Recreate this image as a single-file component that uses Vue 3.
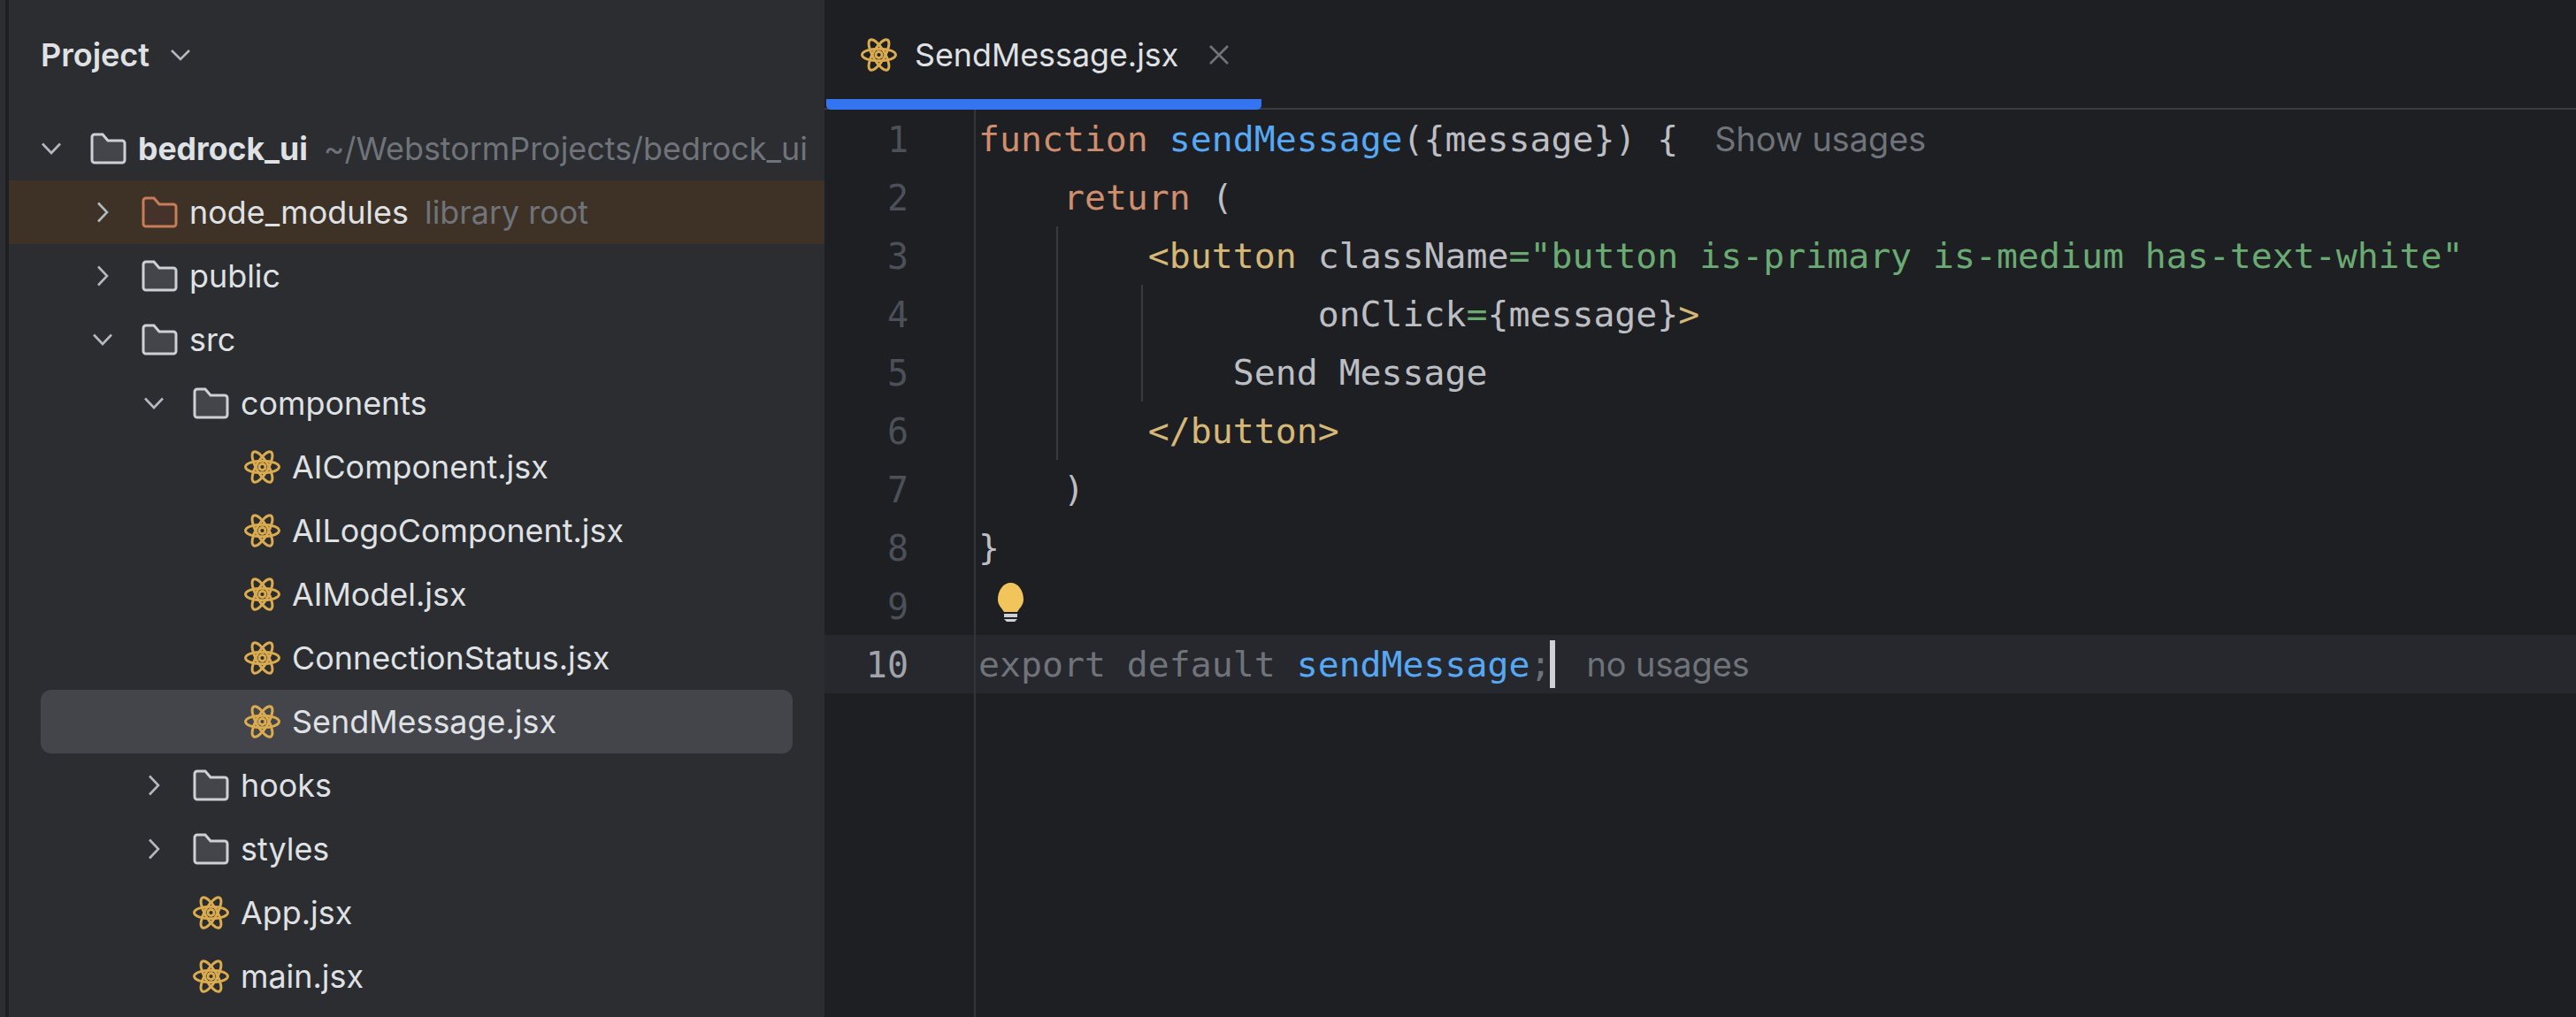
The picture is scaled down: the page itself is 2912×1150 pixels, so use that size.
<script setup>
const tree = [
  { name: 'bedrock_ui', kind: 'folder', open: true, level: 0, bold: true, hint: '~/WebstormProjects/bedrock_ui' },
  { name: 'node_modules', kind: 'lib', open: false, level: 1, hint: 'library root', tint: true },
  { name: 'public', kind: 'folder', open: false, level: 1 },
  { name: 'src', kind: 'folder', open: true, level: 1 },
  { name: 'components', kind: 'folder', open: true, level: 2 },
  { name: 'AIComponent.jsx', kind: 'file', level: 3 },
  { name: 'AILogoComponent.jsx', kind: 'file', level: 3 },
  { name: 'AIModel.jsx', kind: 'file', level: 3 },
  { name: 'ConnectionStatus.jsx', kind: 'file', level: 3 },
  { name: 'SendMessage.jsx', kind: 'file', level: 3, selected: true },
  { name: 'hooks', kind: 'folder', open: false, level: 2 },
  { name: 'styles', kind: 'folder', open: false, level: 2 },
  { name: 'App.jsx', kind: 'file', level: 2 },
  { name: 'main.jsx', kind: 'file', level: 2 }
]

const lines = [
  [['kw', 'function'], ['tx', ' '], ['fn', 'sendMessage'], ['tx', '({message}) {'], ['hint', 'Show usages']],
  [['tx', '    '], ['kw', 'return'], ['tx', ' (']],
  [['tx', '        '], ['tag', '<button'], ['tx', ' className'], ['str', '="button is-primary is-medium has-text-white"']],
  [['tx', '                onClick'], ['str', '='], ['tx', '{message}'], ['tag', '>']],
  [['tx', '            Send Message']],
  [['tx', '        '], ['tag', '</button>']],
  [['tx', '    )']],
  [['tx', '}']],
  [],
  [['dim', 'export default '], ['fn', 'sendMessage'], ['dim', ';'], ['caret', ''], ['hint2', 'no usages']]
]
</script>

<template>
  <div class="app">
    <div class="strip"></div>
    <aside class="sidebar">
      <header class="side-head">
        <span class="side-title">Project</span>
        <svg class="head-chev" viewBox="0 0 24 14" fill="none"><path d="M2 2 L12 12 L22 2" /></svg>
      </header>
      <ul class="tree">
        <li
          v-for="row in tree"
          :key="row.name"
          class="row"
          :class="{ tint: row.tint, selected: row.selected }"
          :style="{ paddingLeft: 46 + row.level * 58 + 'px' }"
        >
          <span class="chev-box">
            <svg v-if="row.kind !== 'file' && row.open" class="chev-down" viewBox="0 0 24 14" fill="none"><path d="M2 1.5 L12 12 L22 1.5" /></svg>
            <svg v-else-if="row.kind !== 'file'" class="chev-right" viewBox="0 0 14 24" fill="none"><path d="M2 1.5 L12 12 L2 22.5" /></svg>
          </span>
          <svg v-if="row.kind !== 'file'" class="folder" :class="{ lib: row.kind === 'lib' }" viewBox="0 0 41 36">
            <path d="M2 5 a3 3 0 0 1 3-3 h9 l6 7 h16 a3 3 0 0 1 3 3 v19 a3 3 0 0 1-3 3 h-31 a3 3 0 0 1-3-3 z" />
          </svg>
          <svg v-else class="react" viewBox="0 0 41 38" fill="none">
            <circle cx="20.5" cy="19" r="3.6" />
            <ellipse cx="20.5" cy="19" rx="19" ry="6.8" />
            <ellipse cx="20.5" cy="19" rx="19.5" ry="6.8" transform="rotate(60 20.5 19)" />
            <ellipse cx="20.5" cy="19" rx="19.5" ry="6.8" transform="rotate(120 20.5 19)" />
          </svg>
          <span class="name" :class="{ bold: row.bold }">{{ row.name }}</span>
          <span v-if="row.hint" class="row-hint">{{ row.hint }}</span>
        </li>
      </ul>
    </aside>
    <main class="main">
      <div class="tabs">
        <div class="tab">
          <svg class="react tab-icon" viewBox="0 0 41 38" fill="none">
            <circle cx="20.5" cy="19" r="3.6" />
            <ellipse cx="20.5" cy="19" rx="19" ry="6.8" />
            <ellipse cx="20.5" cy="19" rx="19.5" ry="6.8" transform="rotate(60 20.5 19)" />
            <ellipse cx="20.5" cy="19" rx="19.5" ry="6.8" transform="rotate(120 20.5 19)" />
          </svg>
          <span class="tab-name">SendMessage.jsx</span>
          <svg class="close" viewBox="0 0 24 24" fill="none"><path d="M2 2 L22 22 M22 2 L2 22" /></svg>
        </div>
      </div>
      <div class="editor">
        <div class="gutter-line"></div>
        <div class="guide g1"></div>
        <div class="guide g2"></div>
        <div
          v-for="(line, i) in lines"
          :key="i"
          class="line"
          :class="{ current: i === 9 }"
        >
          <span class="num">{{ i + 1 }}</span>
          <svg v-if="i === 8" class="bulb" viewBox="0 0 29 44">
            <path class="bulb-glass" d="M14.5 0 C22.5 0 29 8 29 19 C29 25 25 28 22 33 H7 C4 28 0 25 0 19 C0 8 6.5 0 14.5 0 Z" />
            <rect class="bulb-base" x="7" y="35" width="15" height="4" />
            <path class="bulb-base" d="M7 41 H22 L19 44 H10 Z" />
          </svg>
          <span class="code">
            <template v-for="(t, j) in line" :key="j">
              <span v-if="t[0] === 'caret'" class="caret"></span>
              <span v-else :class="t[0]">{{ t[1] }}</span>
            </template>
          </span>
        </div>
      </div>
    </main>
  </div>
</template>

<style scoped>
.app {
  display: flex;
  width: 2912px;
  height: 1150px;
  overflow: hidden;
  background: #1e1f22;
  font-family: Inter, "Noto Sans", sans-serif;
}
.strip {
  width: 6px;
  flex: none;
  background: #2b2d30;
  border-right: 4px solid #1e1f22;
}
.sidebar {
  width: 922px;
  flex: none;
  background: #2b2d30;
  display: flex;
  flex-direction: column;
}
.side-head {
  height: 124px;
  flex: none;
  display: flex;
  align-items: center;
  padding-left: 36px;
  gap: 23px;
}
.side-title {
  font-size: 36px;
  font-weight: 600;
  color: #dfe1e5;
}
.head-chev {
  width: 24px;
  height: 14px;
}
.head-chev path,
.chev-down path,
.chev-right path {
  stroke: #b4b8bf;
  stroke-width: 2.6;
}
.tree {
  list-style: none;
  margin: 8px 0 0;
  padding: 0;
}
.row {
  height: 72px;
  display: flex;
  align-items: center;
  position: relative;
  box-sizing: border-box;
  font-size: 35.9px;
  color: #dfe1e5;
  white-space: nowrap;
  margin-left: -10px;
}
.row.tint {
  background: #3e3226;
  margin-left: 0;
  padding-left: 94px !important;
}
.row.selected::before {
  content: "";
  position: absolute;
  left: 46px;
  right: 36px;
  top: 0;
  bottom: 0;
  border-radius: 12px;
  background: #43454a;
}
.row > * {
  position: relative;
}
.chev-box {
  width: 24px;
  height: 24px;
  flex: none;
  display: flex;
  align-items: center;
  justify-content: center;
  margin-right: 32px;
}
.chev-down {
  width: 24px;
  height: 14px;
}
.chev-right {
  width: 14px;
  height: 24px;
}
.folder {
  width: 41px;
  height: 36px;
  flex: none;
  margin-right: 13px;
}
.folder path {
  fill: #43454a;
  stroke: #ced0d6;
  stroke-width: 3;
}
.folder.lib path {
  fill: #45322b;
  stroke: #c77d55;
}
.react {
  width: 41px;
  height: 38px;
  flex: none;
  margin-right: 13px;
}
.react circle,
.react ellipse {
  stroke: #dbab4f;
  stroke-width: 3;
}
.name.bold {
  font-weight: 700;
  font-size: 35.6px;
}
.row-hint {
  margin-left: 18px;
  color: #6f737a;
}
.main {
  flex: 1;
  min-width: 0;
  display: flex;
  flex-direction: column;
}
.tabs {
  height: 124px;
  flex: none;
  box-sizing: border-box;
  border-bottom: 2px solid #393b40;
}
.tab {
  width: 492px;
  height: 124px;
  margin-left: 2px;
  box-sizing: border-box;
  padding: 12px 0 0 39px;
  border-bottom: 12px solid #3574f0;
  border-radius: 0 0 5px 5px;
  display: flex;
  align-items: center;
  color: #dfe1e5;
  font-size: 35.8px;
}
.tab-icon {
  margin-right: 20px;
}
.tab-name {
  white-space: nowrap;
}
.close {
  width: 24px;
  height: 24px;
  margin-left: 34px;
}
.close path {
  stroke: #6f737a;
  stroke-width: 2.6;
}
.editor {
  position: relative;
  flex: 1;
  font-family: "DejaVu Sans Mono", monospace;
  font-size: 39.85px;
}
.gutter-line {
  position: absolute;
  left: 169px;
  top: 0;
  bottom: 0;
  width: 2px;
  background: #313438;
  z-index: 1;
}
.guide {
  position: absolute;
  width: 2px;
  background: #393b40;
  z-index: 1;
}
.g1 {
  left: 262px;
  top: 132px;
  height: 264px;
}
.g2 {
  left: 358px;
  top: 198px;
  height: 132px;
}
.line {
  position: relative;
  height: 66px;
  display: flex;
  align-items: center;
  white-space: pre;
}
.line.current {
  background: #26282e;
}
.num {
  width: 95px;
  margin-right: 79px;
  padding-top: 2px;
  flex: none;
  text-align: right;
  color: #4b5059;
  font-size: 40px;
}
.current .num {
  color: #a1a3ab;
}
.bulb {
  position: absolute;
  left: 196px;
  top: 7px;
  width: 29px;
  height: 44px;
}
.bulb-glass {
  fill: #f2c55c;
}
.bulb-base {
  fill: #ced0d6;
}
.code {
  display: flex;
  align-items: center;
  height: 66px;
}
.kw {
  color: #cf8e6d;
}
.fn {
  color: #56a8f5;
}
.tx {
  color: #bcbec4;
}
.tag {
  color: #d5b778;
}
.str {
  color: #6aab73;
}
.dim {
  color: #6f737a;
}
.hint,
.hint2 {
  font-family: Inter, sans-serif;
  font-size: 37.8px;
  color: #6f737a;
}
.hint {
  margin-left: 41px;
}
.hint2 {
  margin-left: 35px;
}
.caret {
  width: 6px;
  height: 54px;
  margin-left: -1px;
  background: #ced0d6;
}
</style>

<style>
html,
body {
  margin: 0;
  background: #1e1f22;
}
</style>
